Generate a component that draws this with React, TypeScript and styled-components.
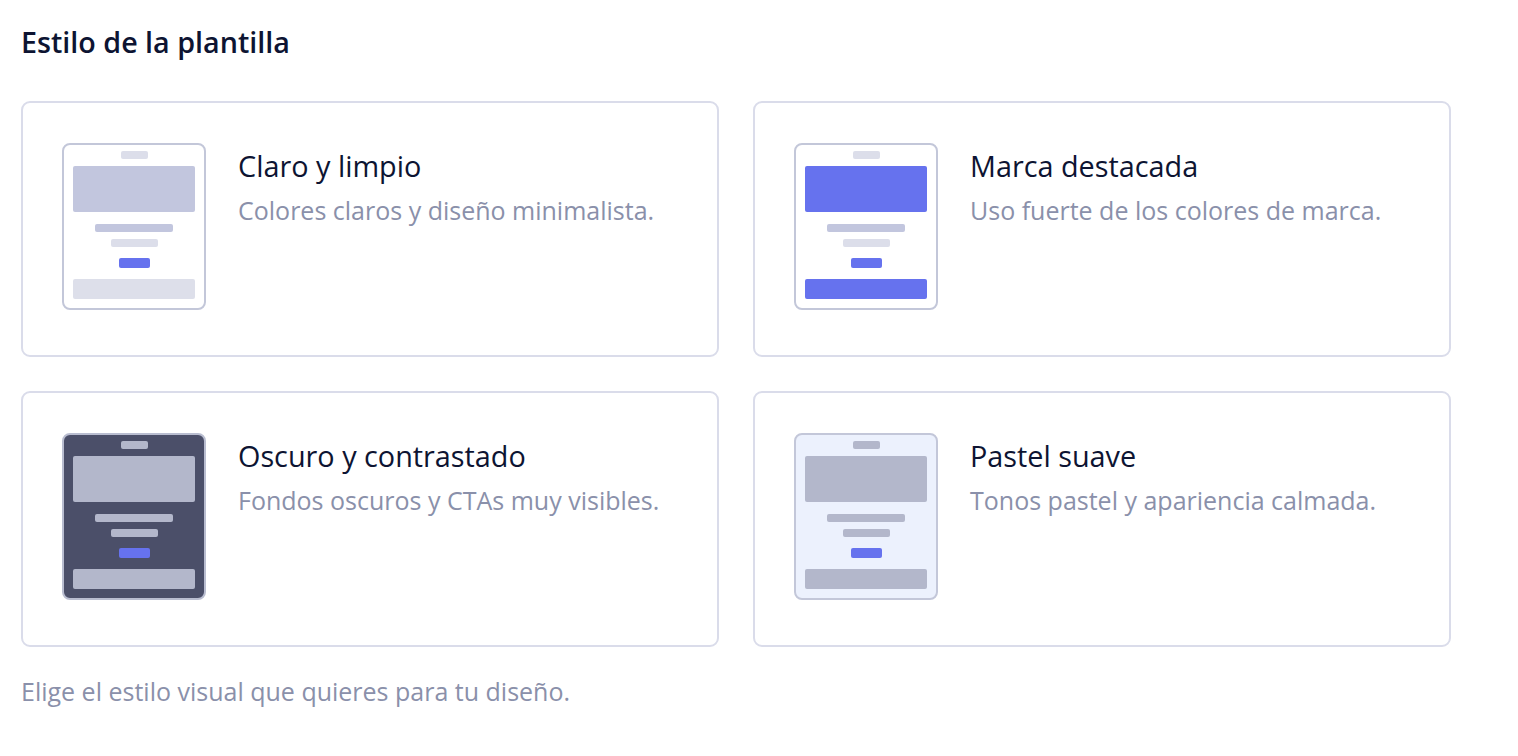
import React from "react";
import styled, { createGlobalStyle } from "styled-components";

const GlobalStyle = createGlobalStyle`
  html, body {
    margin: 0;
    padding: 0;
    background: #ffffff;
  }
  body {
    font-family: "Open Sans", "Noto Sans", sans-serif;
    -webkit-font-smoothing: antialiased;
  }
`;

const Page = styled.div`
  padding: 22px 21px 0;
  display: flex;
  flex-direction: column;
`;

const Heading = styled.h2`
  margin: 0;
  font-size: 28.7px;
  line-height: 40px;
  font-weight: 600;
  color: #0d1432;
`;

const Grid = styled.div`
  margin-top: 39px;
  display: grid;
  grid-template-columns: 698px 698px;
  grid-auto-rows: 256px;
  gap: 34px;
`;

const Card = styled.button`
  box-sizing: border-box;
  display: flex;
  align-items: flex-start;
  gap: 32px;
  padding: 40px 39px;
  background: #ffffff;
  border: 2px solid #dadcea;
  border-radius: 9px;
  text-align: left;
  cursor: pointer;
  font: inherit;
`;

const Thumb = styled.div<{ $bg: string; $edge: string }>`
  box-sizing: border-box;
  flex: none;
  width: 144px;
  height: 167px;
  padding: 6px 9px 8px;
  display: flex;
  flex-direction: column;
  align-items: center;
  background: ${(p) => p.$bg};
  border: 2px solid ${(p) => p.$edge};
  border-radius: 8px;
`;

const Bar = styled.div<{ $w: string; $h: number; $c: string; $mt: number }>`
  flex: none;
  width: ${(p) => p.$w};
  height: ${(p) => p.$h}px;
  margin-top: ${(p) => p.$mt}px;
  background: ${(p) => p.$c};
  border-radius: 2px;
`;

const Copy = styled.div`
  display: flex;
  flex-direction: column;
  padding-top: 4px;
`;

const Name = styled.span`
  font-size: 28.8px;
  line-height: 38px;
  color: #0d1432;
`;

const Desc = styled.span`
  margin-top: 9px;
  font-size: 25px;
  line-height: 32px;
  color: #8a90aa;
`;

const Hint = styled.p`
  margin: 28px 0 0;
  font-size: 25px;
  line-height: 32px;
  color: #8a90aa;
`;

type Palette = {
  bg: string;
  edge: string;
  pill: string;
  hero: string;
  line1: string;
  line2: string;
  cta: string;
  foot: string;
};

type Style = { name: string; desc: string; palette: Palette };

const BLUE = "#6672ee";

const styles: Style[] = [
  {
    name: "Claro y limpio",
    desc: "Colores claros y diseño minimalista.",
    palette: {
      bg: "#ffffff",
      edge: "#c3c7d9",
      pill: "#dcdeea",
      hero: "#c2c6de",
      line1: "#c2c6de",
      line2: "#dcdeea",
      cta: BLUE,
      foot: "#dddfea",
    },
  },
  {
    name: "Marca destacada",
    desc: "Uso fuerte de los colores de marca.",
    palette: {
      bg: "#ffffff",
      edge: "#c3c7d9",
      pill: "#dcdeea",
      hero: BLUE,
      line1: "#c2c6de",
      line2: "#dcdeea",
      cta: BLUE,
      foot: BLUE,
    },
  },
  {
    name: "Oscuro y contrastado",
    desc: "Fondos oscuros y CTAs muy visibles.",
    palette: {
      bg: "#4b4f69",
      edge: "#b9bdd0",
      pill: "#b3b7cb",
      hero: "#b3b7cb",
      line1: "#b3b7cb",
      line2: "#b3b7cb",
      cta: BLUE,
      foot: "#b3b7cb",
    },
  },
  {
    name: "Pastel suave",
    desc: "Tonos pastel y apariencia calmada.",
    palette: {
      bg: "#ecf1fd",
      edge: "#c3c7d9",
      pill: "#b3b7cb",
      hero: "#b3b7cb",
      line1: "#b3b7cb",
      line2: "#b3b7cb",
      cta: BLUE,
      foot: "#b3b7cb",
    },
  },
];

function Preview({ p }: { p: Palette }) {
  return (
    <Thumb $bg={p.bg} $edge={p.edge}>
      <Bar $w="27px" $h={8} $c={p.pill} $mt={0} />
      <Bar $w="100%" $h={46} $c={p.hero} $mt={7} />
      <Bar $w="78px" $h={8} $c={p.line1} $mt={12} />
      <Bar $w="47px" $h={8} $c={p.line2} $mt={7} />
      <Bar $w="31px" $h={10} $c={p.cta} $mt={11} />
      <Bar $w="100%" $h={20} $c={p.foot} $mt={11} />
    </Thumb>
  );
}

export default function App() {
  return (
    <>
      <GlobalStyle />
      <Page>
        <Heading>Estilo de la plantilla</Heading>
        <Grid>
          {styles.map((s) => (
            <Card key={s.name} type="button">
              <Preview p={s.palette} />
              <Copy>
                <Name>{s.name}</Name>
                <Desc>{s.desc}</Desc>
              </Copy>
            </Card>
          ))}
        </Grid>
        <Hint>Elige el estilo visual que quieres para tu diseño.</Hint>
      </Page>
    </>
  );
}
